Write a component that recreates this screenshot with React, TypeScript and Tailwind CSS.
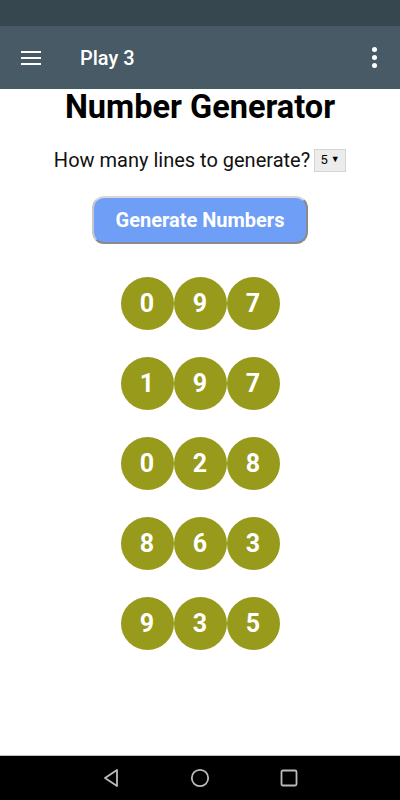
import React from "react";

const rows = [
  [0, 9, 7],
  [1, 9, 7],
  [0, 2, 8],
  [8, 6, 3],
  [9, 3, 5],
];

export default function App() {
  return (
    <div className="flex h-[800px] w-[400px] flex-col bg-white" style={{ fontFamily: "Roboto, 'Noto Sans', sans-serif" }}>
      <div className="h-[26px] bg-[#37474f]" />
      <div className="flex h-[63px] items-center bg-[#475a65]">
        <div className="ml-[21px] flex w-[20px] flex-col gap-[4px]">
          <div className="h-[2px] bg-white" />
          <div className="h-[2px] bg-white" />
          <div className="h-[2px] bg-white" />
        </div>
        <div className="ml-[39px] text-[20px] font-medium text-white">Play 3</div>
        <div className="ml-auto mr-[23px] flex flex-col gap-[3px]">
          <div className="h-[5px] w-[5px] rounded-full bg-white" />
          <div className="h-[5px] w-[5px] rounded-full bg-white" />
          <div className="h-[5px] w-[5px] rounded-full bg-white" />
        </div>
      </div>
      <div className="flex flex-1 flex-col items-center">
        <h1 className="text-[32.5px] font-bold leading-[36px] text-black">Number Generator</h1>
        <div className="mt-[23px] flex h-[24px] items-center gap-[4px]">
          <span className="text-[20px] text-[#111]">How many lines to generate?</span>
          <div className="flex h-[23px] w-[32px] items-center justify-center gap-[3px] border border-[#d4d4d4] bg-[#ececec] text-[13px] text-black">
            <span>5</span>
            <span className="text-[9px]">▼</span>
          </div>
        </div>
        <button className="mt-[24px] h-[48px] w-[216px] rounded-[12px] border-2 border-b-[#8a8a8a] border-l-[#c8c8c8] border-r-[#8a8a8a] border-t-[#d8d8d8] bg-[#6f9ef7] text-[20px] font-bold text-white">
          Generate Numbers
        </button>
        <div className="mt-[33px] flex flex-col gap-[27px]">
          {rows.map((r, i) => (
            <div key={i} className="flex">
              {r.map((n, j) => (
                <div key={j} className="flex h-[53px] w-[53px] items-center justify-center rounded-full bg-[#979a1a] text-[25px] font-bold text-white">
                  {n}
                </div>
              ))}
            </div>
          ))}
        </div>
      </div>
      <div className="flex h-[45px] items-center justify-center gap-[70px] border-t border-[#bdbdbd] bg-black">
        <svg width="18" height="20" viewBox="0 0 18 20">
          <path d="M15 2 L3 10 L15 18 Z" fill="none" stroke="#bbb" strokeWidth="1.8" strokeLinejoin="round" />
        </svg>
        <svg width="20" height="20" viewBox="0 0 20 20">
          <circle cx="10" cy="10" r="8.2" fill="none" stroke="#bbb" strokeWidth="1.8" />
        </svg>
        <svg width="18" height="18" viewBox="0 0 18 18">
          <rect x="1.5" y="1.5" width="15" height="15" rx="1.5" fill="none" stroke="#bbb" strokeWidth="1.8" />
        </svg>
      </div>
    </div>
  );
}
